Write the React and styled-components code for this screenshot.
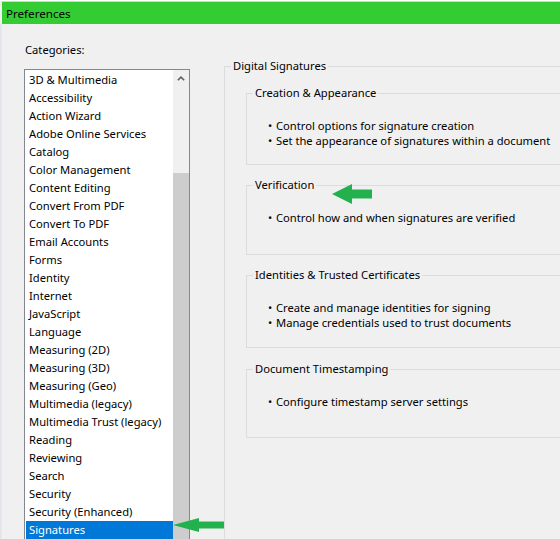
import React from 'react';
import styled, { createGlobalStyle } from 'styled-components';

const GlobalStyle = createGlobalStyle`
  html, body {
    margin: 0;
    padding: 0;
    overflow: hidden;
    background: #f0f0f0;
  }
  body {
    font-family: "Noto Sans", "Open Sans", sans-serif;
    font-size: 11.2px;
    color: #000;
  }
`;

const Window = styled.div`
  width: 560px;
  height: 539px;
  border-top: 1px solid #ffffff;
  box-sizing: border-box;
  overflow: hidden;
  background: #f0f0f0;
`;

const TitleBar = styled.div`
  height: 22px;
  margin-left: 2px;
  border-top: 1px solid #d4d4d4;
  background: #33cc33;
  display: flex;
  align-items: center;
  padding-left: 4px;
  font-size: 11.6px;
`;

const Body = styled.div`
  display: flex;
  align-items: flex-start;
  border-left: 2px solid #e4e6ec;
  height: 100%;
  padding-left: 22px;
`;

const LeftColumn = styled.div`
  padding-top: 17px;
  display: flex;
  flex-direction: column;
  position: relative;
`;

const Label = styled.div`
  height: 18px;
  line-height: 18px;
  margin-bottom: 10px;
  margin-left: 1px;
`;

const ListBox = styled.div`
  width: 166px;
  height: 520px;
  box-sizing: border-box;
  border: 1px solid #828790;
  background: #ffffff;
  display: flex;
  overflow: hidden;
`;

const Items = styled.div`
  flex: 1;
  padding-left: 1px;
  padding-top: 1px;
  display: flex;
  flex-direction: column;
`;

const Item = styled.div`
  height: 18px;
  line-height: 18px;
  padding-left: 3px;
  white-space: nowrap;
  background: ${({ selected }) => (selected ? '#0078d7' : 'transparent')};
  color: ${({ selected }) => (selected ? '#ffffff' : '#000000')};
`;

const ScrollBar = styled.div`
  width: 16px;
  background: #f0f0f0;
  display: flex;
  flex-direction: column;
`;

const ScrollButton = styled.div`
  height: 17px;
  display: flex;
  align-items: center;
  justify-content: center;
`;

const ScrollTrack = styled.div`
  height: 86px;
`;

const ScrollThumb = styled.div`
  flex: 1;
  background: #cdcdcd;
`;

const RightColumn = styled.div`
  margin-left: 34px;
  padding-top: 33px;
`;

const Group = styled.fieldset`
  margin: 0;
  padding: 0 0 0 6px;
  border: 1px solid #dcdcdc;
  box-sizing: border-box;
  min-width: 0;
  position: relative;
`;

const OuterGroup = styled(Group)`
  width: 360px;
  height: 520px;
`;

const InnerGroup = styled(Group)`
  width: 340px;
  height: ${({ h }) => h}px;
  margin-top: ${({ gap }) => gap}px;
`;

const Legend = styled.legend`
  padding: 0 2px;
  height: 18px;
  line-height: 18px;
`;

const GroupContent = styled.div`
  padding-left: 15px;
`;

const Bullets = styled.ul`
  list-style: none;
  margin: 16px 0 0;
  padding: 0 0 0 15px;
`;

const Bullet = styled.li`
  height: 15px;
  line-height: 15px;
  white-space: nowrap;
  &::before {
    content: '•';
    display: inline-block;
    width: 8px;
  }
`;

const ArrowMark = styled.svg`
  position: absolute;
  left: ${({ x }) => x}px;
  top: ${({ y }) => y}px;
`;

const categories = [
  '3D & Multimedia',
  'Accessibility',
  'Action Wizard',
  'Adobe Online Services',
  'Catalog',
  'Color Management',
  'Content Editing',
  'Convert From PDF',
  'Convert To PDF',
  'Email Accounts',
  'Forms',
  'Identity',
  'Internet',
  'JavaScript',
  'Language',
  'Measuring (2D)',
  'Measuring (3D)',
  'Measuring (Geo)',
  'Multimedia (legacy)',
  'Multimedia Trust (legacy)',
  'Reading',
  'Reviewing',
  'Search',
  'Security',
  'Security (Enhanced)',
  'Signatures',
  'Spelling',
  'Tracker',
];

const groups = [
  {
    title: 'Creation & Appearance',
    lines: ['Control options for signature creation', 'Set the appearance of signatures within a document'],
    h: 81,
    gap: 9,
  },
  {
    title: 'Verification',
    lines: ['Control how and when signatures are verified'],
    h: 79,
    gap: 11,
    arrow: true,
  },
  {
    title: 'Identities & Trusted Certificates',
    lines: ['Create and manage identities for signing', 'Manage credentials used to trust documents'],
    h: 82,
    gap: 11,
  },
  {
    title: 'Document Timestamping',
    lines: ['Configure timestamp server settings'],
    h: 78,
    gap: 12,
  },
];

const GreenArrow = ({ x, y, w, h, shaft }) => {
  const head = Math.round(w * 0.5);
  const mid = h / 2;
  const pts = [
    [0, mid],
    [head, 0],
    [head, mid - shaft / 2],
    [w, mid - shaft / 2],
    [w, mid + shaft / 2],
    [head, mid + shaft / 2],
    [head, h],
  ]
    .map((p) => p.join(','))
    .join(' ');
  return (
    <ArrowMark x={x} y={y} width={w} height={h} viewBox={`0 0 ${w} ${h}`}>
      <polygon points={pts} fill="#22b14c" />
    </ArrowMark>
  );
};

const App = () => {
  return (
    <>
      <GlobalStyle />
      <Window>
        <TitleBar>Preferences</TitleBar>
        <Body>
          <LeftColumn>
            <Label>Categories:</Label>
            <ListBox>
              <Items>
                {categories.map((c) => (
                  <Item key={c} selected={c === 'Signatures'}>
                    {c}
                  </Item>
                ))}
              </Items>
              <ScrollBar>
                <ScrollButton>
                  <svg width="8" height="5" viewBox="0 0 8 5">
                    <polyline points="0.8,4.3 4,1.2 7.2,4.3" fill="none" stroke="#606060" strokeWidth="1.6" />
                  </svg>
                </ScrollButton>
                <ScrollTrack />
                <ScrollThumb />
              </ScrollBar>
            </ListBox>
            <GreenArrow x={149} y={494} w={52} h={14} shaft={7} />
          </LeftColumn>
          <RightColumn>
            <OuterGroup>
              <Legend>Digital Signatures</Legend>
              <GroupContent>
                {groups.map((g) => (
                  <InnerGroup key={g.title} h={g.h} gap={g.gap}>
                    <Legend>{g.title}</Legend>
                    <Bullets>
                      {g.lines.map((l) => (
                        <Bullet key={l}>{l}</Bullet>
                      ))}
                    </Bullets>
                    {g.arrow && <GreenArrow x={85} y={-10} w={40} h={20} shaft={9} />}
                  </InnerGroup>
                ))}
              </GroupContent>
            </OuterGroup>
          </RightColumn>
        </Body>
      </Window>
    </>
  );
};

export default App;
